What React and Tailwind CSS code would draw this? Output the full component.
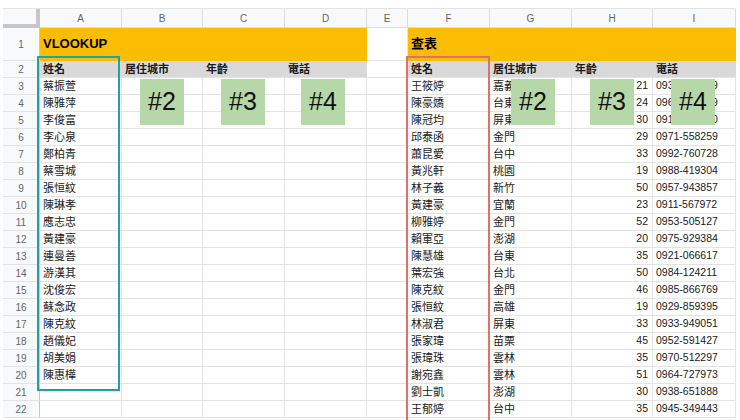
const font = { fontFamily: '"Liberation Sans", Arial, "Noto Sans CJK TC", sans-serif' };

const colLetters = ["A", "B", "C", "D", "E", "F", "G", "H", "I"];

const leftNames = [
  "蔡振萱", "陳雅萍", "李俊富", "李心泉", "鄭柏青", "蔡雪城", "張恒紋", "陳琳孝", "應志忠",
  "黃建豪", "連曼善", "游漢其", "沈俊宏", "蘇念政", "陳克紋", "趙儀妃", "胡美娟", "陳惠樺",
];

const rightRows = [
  ["王筱婷", "嘉義", 21, "0932-188569"],
  ["陳豪嬌", "台東", 24, "0961-237409"],
  ["陳冠均", "屏東", 30, "0918-462270"],
  ["邱泰函", "金門", 29, "0971-558259"],
  ["蕭昆愛", "台中", 33, "0992-760728"],
  ["黃兆軒", "桃園", 19, "0988-419304"],
  ["林子義", "新竹", 50, "0957-943857"],
  ["黃建豪", "宜蘭", 23, "0911-567972"],
  ["柳雅婷", "金門", 52, "0953-505127"],
  ["賴軍亞", "澎湖", 20, "0975-929384"],
  ["陳慧雄", "台東", 35, "0921-066617"],
  ["葉宏強", "台北", 50, "0984-124211"],
  ["陳克紋", "金門", 46, "0985-866769"],
  ["張恒紋", "高雄", 19, "0929-859395"],
  ["林淑君", "屏東", 33, "0933-949051"],
  ["張家瑋", "苗栗", 45, "0952-591427"],
  ["張瑋珠", "雲林", 35, "0970-512297"],
  ["謝宛鑫", "雲林", 51, "0964-727973"],
  ["劉士凱", "澎湖", 30, "0938-651888"],
  ["王郁婷", "台中", 35, "0945-349443"],
];

const cell = "border-r border-b border-[#e3e3e3] flex items-center whitespace-nowrap overflow-hidden text-[#1a1a1a]";
const cjk = cell + " px-[3px] text-[11px]";
const num = cell + " text-[10.5px]";
const rowNum = "border-r border-b border-r-[#c7c7c7] border-b-[#e3e3e3] bg-[#f8f9fa] flex items-center justify-center text-[10px] text-[#666]";
const headCell = "border-r border-b border-[#dcdcdc] bg-[#f8f9fa] flex items-center justify-center text-[10px] text-[#666]";
const greyHead = "border-r border-b border-r-transparent border-b-[#e3e3e3] bg-[#d9d9d9] flex items-center px-[3px] text-[11px] font-bold text-[#1a1a1a] whitespace-nowrap";

function GreenBox({ left, label }) {
  return (
    <div
      className="absolute top-[79px] w-[44px] h-[46px] bg-[#b6d7a8] flex items-center justify-center text-[25px] text-[#111]"
      style={{ left }}
    >
      {label}
    </div>
  );
}

export default function App() {
  const rows = [];
  for (let i = 0; i < 20; i++) {
    const n = i + 3;
    const r = rightRows[i];
    rows.push(
      <div key={"n" + n} className={rowNum}>{n}</div>,
      <div key={"a" + n} className={cjk}>{leftNames[i] || ""}</div>,
      <div key={"b" + n} className={cell}></div>,
      <div key={"c" + n} className={cell}></div>,
      <div key={"d" + n} className={cell}></div>,
      <div key={"e" + n} className={cell}></div>,
      <div key={"f" + n} className={cjk}>{r[0]}</div>,
      <div key={"g" + n} className={cjk}>{r[1]}</div>,
      <div key={"h" + n} className={num + " justify-end pr-[4px]"}>{r[2]}</div>,
      <div key={"i" + n} className={num + " px-[3px]"}>{r[3]}</div>
    );
  }

  return (
    <div className="relative w-[740px] h-[420px] bg-white overflow-hidden pt-[8px] pl-[3px]" style={font}>
      <div className="grid w-[733px] grid-cols-[37px_82px_81px_82px_82px_41px_82px_82px_81px_83px] grid-rows-[19px_33px_repeat(21,17px)] border-t border-[#e3e3e3]">
        {/* column letters */}
        <div className="bg-[#f8f9fa] border-r-4 border-b-4 border-[#c7c7c7]"></div>
        {colLetters.map((c) => (
          <div key={c} className={headCell}>{c}</div>
        ))}

        {/* row 1 */}
        <div className={rowNum}>1</div>
        <div className="col-span-4 bg-[#fbbc04] border-b border-[#fbbc04] flex items-center px-[3px] text-[13px] font-bold text-black">
          VLOOKUP
        </div>
        <div className="border-r border-b border-[#e3e3e3]"></div>
        <div className="col-span-4 bg-[#fbbc04] border-b border-[#fbbc04] flex items-center px-[3px] text-[13px] font-bold text-black">
          查表
        </div>

        {/* row 2 */}
        <div className={rowNum}>2</div>
        <div className={greyHead}>姓名</div>
        <div className={greyHead}>居住城市</div>
        <div className={greyHead}>年齡</div>
        <div className={greyHead}>電話</div>
        <div className="border-r border-b border-[#e3e3e3]"></div>
        <div className={greyHead}>姓名</div>
        <div className={greyHead}>居住城市</div>
        <div className={greyHead}>年齡</div>
        <div className={greyHead}>電話</div>

        {rows}
      </div>

      {/* selection outlines */}
      <div className="absolute left-[37px] top-[56px] w-[83px] h-[335px] border-2 border-[#1fa2a7]"></div>
      <div className="absolute left-[406px] top-[56px] w-[84px] h-[380px] border-2 border-[#e0706a]"></div>

      {/* green markers */}
      <GreenBox left={140} label="#2" />
      <GreenBox left={221} label="#3" />
      <GreenBox left={301} label="#4" />
      <GreenBox left={511} label="#2" />
      <GreenBox left={590} label="#3" />
      <GreenBox left={671} label="#4" />
    </div>
  );
}
